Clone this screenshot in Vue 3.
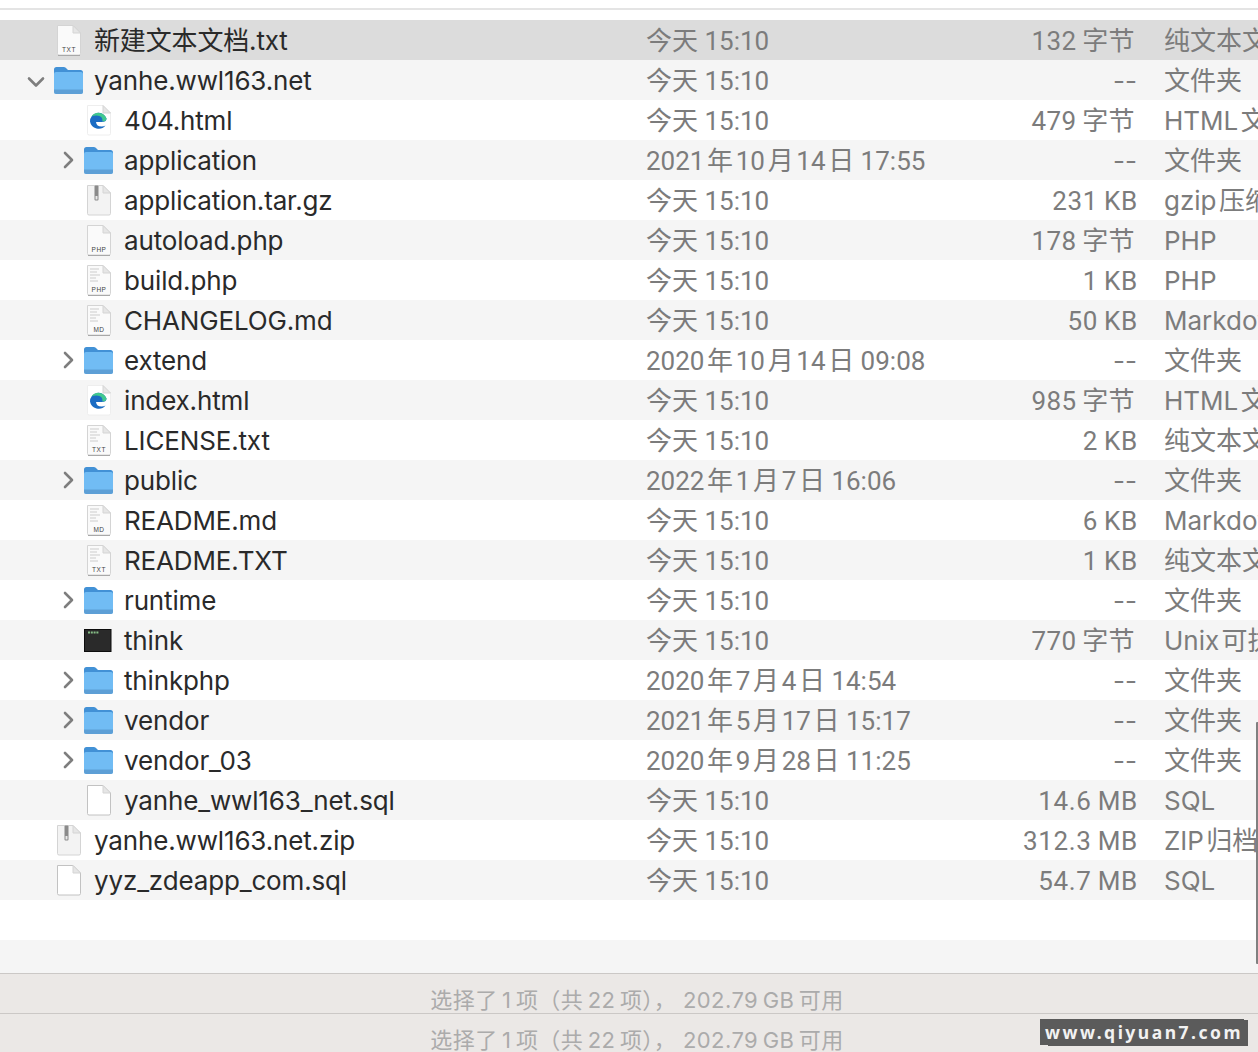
<script setup>
const today = '今天 15:10'
// "~" marks the narrow gap the reference shows between CJK and Latin text
const thin = (s) => s.replace(/~/g, '\u2009')
const hair = (s) => s.replace(/~/g, '\u200a')
const rows = [
  { name: '新建文本文档.txt', level: 0, icon: 'doc', label: 'TXT', date: today, size: '132~字节', kind: '纯文本文稿', selected: true },
  { name: 'yanhe.wwl163.net', level: 0, icon: 'folder', open: true, date: today, size: '--', kind: '文件夹' },
  { name: '404.html', level: 1, icon: 'edge', date: today, size: '479~字节', kind: 'HTML~文本' },
  { name: 'application', level: 1, icon: 'folder', date: '2021~年~10~月~14~日 17:55', size: '--', kind: '文件夹' },
  { name: 'application.tar.gz', level: 1, icon: 'zip', date: today, size: '231~KB', kind: 'gzip~压缩归档' },
  { name: 'autoload.php', level: 1, icon: 'doc', label: 'PHP', date: today, size: '178~字节', kind: 'PHP' },
  { name: 'build.php', level: 1, icon: 'doc', label: 'PHP', lines: true, date: today, size: '1~KB', kind: 'PHP' },
  { name: 'CHANGELOG.md', level: 1, icon: 'doc', label: 'MD', lines: true, date: today, size: '50~KB', kind: 'Markdown' },
  { name: 'extend', level: 1, icon: 'folder', date: '2020~年~10~月~14~日 09:08', size: '--', kind: '文件夹' },
  { name: 'index.html', level: 1, icon: 'edge', date: today, size: '985~字节', kind: 'HTML~文本' },
  { name: 'LICENSE.txt', level: 1, icon: 'doc', label: 'TXT', lines: true, date: today, size: '2~KB', kind: '纯文本文稿' },
  { name: 'public', level: 1, icon: 'folder', date: '2022~年~1~月~7~日 16:06', size: '--', kind: '文件夹' },
  { name: 'README.md', level: 1, icon: 'doc', label: 'MD', lines: true, date: today, size: '6~KB', kind: 'Markdown' },
  { name: 'README.TXT', level: 1, icon: 'doc', label: 'TXT', lines: true, date: today, size: '1~KB', kind: '纯文本文稿' },
  { name: 'runtime', level: 1, icon: 'folder', date: today, size: '--', kind: '文件夹' },
  { name: 'think', level: 1, icon: 'exec', date: today, size: '770~字节', kind: 'Unix~可执行文件' },
  { name: 'thinkphp', level: 1, icon: 'folder', date: '2020~年~7~月~4~日 14:54', size: '--', kind: '文件夹' },
  { name: 'vendor', level: 1, icon: 'folder', date: '2021~年~5~月~17~日 15:17', size: '--', kind: '文件夹' },
  { name: 'vendor_03', level: 1, icon: 'folder', date: '2020~年~9~月~28~日 11:25', size: '--', kind: '文件夹' },
  { name: 'yanhe_wwl163_net.sql', level: 1, icon: 'blank', date: today, size: '14.6~MB', kind: 'SQL' },
  { name: 'yanhe.wwl163.net.zip', level: 0, icon: 'zip', date: today, size: '312.3~MB', kind: 'ZIP~归档' },
  { name: 'yyz_zdeapp_com.sql', level: 0, icon: 'blank', date: today, size: '54.7~MB', kind: 'SQL' },
]
const status = thin('选择了~1~项（共~22~项）， 202.79~GB~可用')
const sizeClass = (s) => (s === '--' ? 'dash' : s.endsWith('B') ? 'bytes' : 'cjk')
</script>

<template>
  <div class="finder">
    <div class="top"></div>
    <div class="list">
      <div
        v-for="(r, i) in rows"
        :key="r.name"
        class="row"
        :class="{ alt: i % 2 === 1, selected: r.selected }"
      >
        <div class="name" :style="{ paddingLeft: 26 + r.level * 30 + 'px' }">
          <span class="twist">
            <svg v-if="r.icon === 'folder'" width="20" height="20" viewBox="0 0 20 20" :class="{ open: r.open }">
              <path d="M7 3 14 10 7 17" fill="none" stroke="#7e7e7e" stroke-width="2.6" stroke-linecap="round" stroke-linejoin="round" />
            </svg>
          </span>

          <svg class="icon" width="32" height="40" viewBox="0 0 32 40">
            <g v-if="r.icon === 'folder'" transform="translate(0 1)">
              <path d="M1 11V8.500Q1 6 3.500 6H11Q12.500 6 13.500 7.500L15 9H27.500Q30 9 30 11.500V13H1Z" fill="#4291d6" />
              <path d="M1 12.500Q1 11 3 11H28Q30 11 30 12.500V30.500Q30 33 27.500 33H3.500Q1 33 1 30.500Z" fill="#71bcf4" />
              <path d="M1 28.500H30V30.500Q30 33 27.500 33H3.500Q1 33 1 30.500Z" fill="#5d9fd6" />
            </g>
            <template v-else-if="r.icon === 'exec'">
              <rect x="1.500" y="9.500" width="26.500" height="22" fill="#2a2a2a" stroke="#0d0d0d" stroke-width="1" />
              <path d="M5 12.500H15.500" stroke="#86bd86" stroke-width="2" stroke-dasharray="2 0.800" />
            </template>
            <g v-else transform="translate(-1 0)">
              <path
                d="M5.500 5.500H21L28.500 13V33.500Q28.500 35 27 35H7Q5.500 35 5.500 33.500Z"
                :fill="r.icon === 'zip' ? '#f3f3f3' : r.icon === 'doc' ? '#fafafa' : '#fff'"
                :stroke="r.icon === 'edge' ? '#eeeeee' : r.icon === 'blank' ? '#c2c2c2' : '#d4d4d4'"
                stroke-width="1"
              />
              <path d="M21 5.500V13H28.500Z" fill="#e6e6e6" stroke="#d4d4d4" stroke-width="1" stroke-linejoin="round" />
              <template v-if="r.icon === 'doc'">
                <path v-if="r.lines" d="M8 9H17M8 12H15M8 15H18M8 18H14M8 21H16" stroke="#cccccc" stroke-width="1" />
                <path d="M6 35.500H28" stroke="#a8a8a8" stroke-width="1" />
                <text x="17" y="31.500" text-anchor="middle" class="icon-label">{{ r.label }}</text>
              </template>
              <template v-if="r.icon === 'zip'">
                <rect x="12.500" y="5.500" width="4" height="15" rx="1" fill="#8a8a8a" />
                <rect x="13.500" y="16" width="2" height="3.500" fill="#e8e8e8" />
              </template>
              <template v-if="r.icon === 'edge'">
                <path d="M8 21.500A8.500 8.500 0 0 1 24.500 18.500Q24.500 22 19.500 22H14Q14.500 26.500 19.500 26.500Q22 26.500 23.500 25.500A8.800 8.800 0 0 1 8 21.500Z" fill="#1b6cc4" />
                <path d="M9.500 16.500A8.500 8.500 0 0 1 24.500 18.500Q24.500 21.500 20.500 21.500Q21 15.500 14.500 15.500Q11.500 15.500 9.500 16.500Z" fill="#41c88f" />
              </template>
            </g>
          </svg>

          <span class="label">{{ r.name }}</span>
        </div>
        <div class="date">{{ hair(r.date) }}</div>
        <div class="size" :class="sizeClass(r.size)">{{ thin(r.size) }}</div>
        <div class="kind">{{ hair(r.kind) }}</div>
      </div>
      <div class="row"></div>
      <div class="row alt short"></div>
    </div>
    <div class="status">{{ status }}</div>
    <div class="status">{{ status }}</div>
    <div class="scroll"></div>
    <div class="mark">www.qiyuan7.com</div>
  </div>
</template>

<style>
html, body { margin: 0; background: #fff; }
</style>

<style scoped>
.finder {
  position: relative;
  width: 1258px;
  height: 1052px;
  overflow: hidden;
  background: #ebe8e6;
  font-family: Inter, "Noto Sans CJK SC", sans-serif;
  font-size: 26px;
  color: #7c7c7c;
}
.top {
  height: 20px;
  background: linear-gradient(#fff 8px, #e4e4e4 8px, #e4e4e4 10px, #fff 10px);
}
.list { background: #fff; }
.row {
  display: grid;
  grid-template-columns: 646px 320px 172px 120px;
  height: 40px;
  white-space: nowrap;
  background: #fff;
}
.row.alt { background: #f5f5f5; }
.row.selected { background: #dcdcdc; }
.row.short { height: 33px; }
.name {
  display: flex;
  align-items: center;
  color: #2a2a2a;
  overflow: hidden;
  letter-spacing: -0.150px;
}
.label, .date, .size, .kind {
  padding-top: 2px;
  line-height: 38px;
}
.date, .size {
  font-family: Roboto, "Noto Sans CJK SC", sans-serif;
}
.twist {
  width: 24px;
  height: 20px;
  flex: none;
  margin-right: 3px;
}
.twist svg { display: block; margin-left: 2px; }
.twist svg.open { transform: translate(-2px, 1.500px) rotate(90deg); }
.icon { flex: none; margin-right: 9px; }
.icon-label {
  font-family: "Liberation Sans", sans-serif;
  font-size: 6.500px;
  letter-spacing: 0.500px;
  fill: #444;
}
.size { text-align: right; }
.size.dash { font-family: Inter, sans-serif; padding-right: 1px; }
.size.bytes { letter-spacing: 0.700px; }
.size.cjk { letter-spacing: 0.400px; padding-right: 3px; }
.kind { padding-left: 26px; overflow: hidden; }
.status {
  height: 39px;
  line-height: 52px;
  border-top: 1px solid #cbc8c6;
  padding-left: 16px;
  text-align: center;
  font-size: 22px;
  letter-spacing: 0.450px;
  color: #ababab;
  overflow: hidden;
  white-space: pre;
}
.scroll {
  position: absolute;
  right: 0;
  top: 722px;
  width: 2px;
  height: 242px;
  background: #808080;
  border-radius: 1px 0 0 1px;
}
.mark {
  position: absolute;
  left: 1040px;
  top: 1019px;
  width: 208px;
  height: 27px;
  line-height: 27px;
  text-align: center;
  background: #5b5b5b;
  color: #f2f2f2;
  font-family: "Noto Sans", sans-serif;
  font-weight: 700;
  font-size: 17.500px;
  letter-spacing: 2.500px;
  clip-path: polygon(0 0, 204px 0, 204px 1px, 100% 1px, 100% 100%, 8px 100%, 8px 26px, 0 26px);
}
</style>
